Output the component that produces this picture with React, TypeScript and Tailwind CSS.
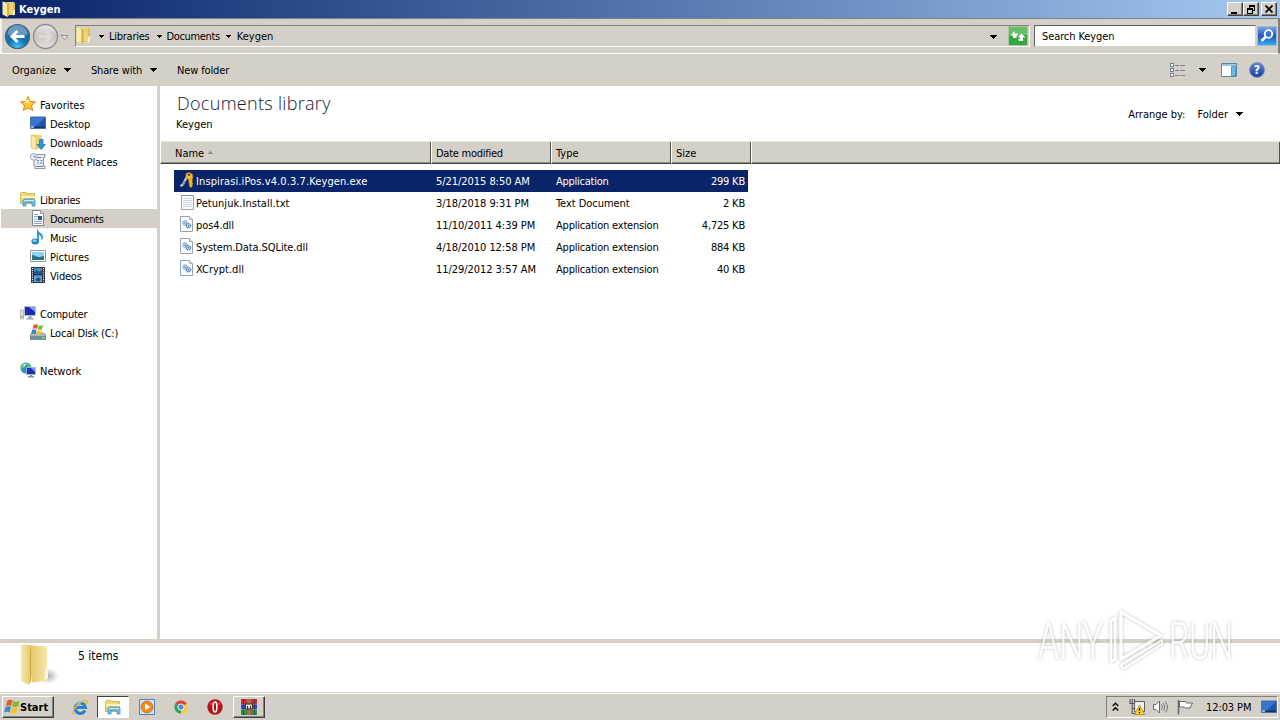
import type { ReactNode } from 'react';

interface NavItem {
  label: string;
  icon: ReactNode;
  nested?: boolean;
  active?: boolean;
  tracking?: string;
}

interface FileRow {
  name: string;
  date: string;
  type: string;
  size: string;
  icon: ReactNode;
  nameTracking?: string;
  typeTracking?: string;
  selected?: boolean;
}

const raised =
  'border border-t-white border-l-white border-r-[#404040] border-b-[#404040] shadow-[inset_-1px_-1px_0_#808080] bg-[#d4d0c8]';

function Label({ children, className = '' }: { children: ReactNode; className?: string }) {
  return <span className={`pt-[2px] ${className}`}>{children}</span>;
}

function Caret({ className = '' }: { className?: string }) {
  return (
    <svg className={`shrink-0 ${className}`} viewBox="0 0 7 4" shapeRendering="crispEdges">
      <path d="M0 0h7L3.5 4z" fill="#000" />
    </svg>
  );
}

function FolderIcon({ className = 'w-4 h-4' }: { className?: string }) {
  return (
    <svg className={className} viewBox="0 0 16 16">
      <path d="M6 1h7v13H6z" fill="#ecd572" />
      <path d="M12 1l2 .8v8l-2 4z" fill="#dcbd56" />
      <path d="M1.500.5l5 1.300V16l-5-2.500z" fill="#f7e9a4" />
      <path d="M6 1.500l2.200 1v12L6 16z" fill="#d6b450" />
      <path d="M12 9.500l2-.7v5l-2 .7z" fill="#fdf6d0" />
    </svg>
  );
}

function BigFolder() {
  return (
    <svg className="w-[40px] h-[44px]" viewBox="0 0 40 44">
      <defs>
        <linearGradient id="bf1" x1="0" x2="1">
          <stop offset="0" stopColor="#f8eba9" />
          <stop offset="1" stopColor="#e3c76c" />
        </linearGradient>
        <linearGradient id="bf2" x1="0" x2="1">
          <stop offset="0" stopColor="#e0c062" />
          <stop offset="1" stopColor="#f7e9a8" />
        </linearGradient>
        <radialGradient id="bf3">
          <stop offset="0" stopColor="#888" stopOpacity=".7" />
          <stop offset="1" stopColor="#999" stopOpacity="0" />
        </radialGradient>
      </defs>
      <ellipse cx="28" cy="33" rx="11" ry="8" fill="url(#bf3)" />
      <path d="M7 2l20 1.500v34l-15 2z" fill="url(#bf2)" />
      <path d="M1 2l5-1 5 5v31l-2 5-8-4z" fill="url(#bf1)" />
      <path d="M10.500 6v33" stroke="#c8a64a" strokeWidth="1" />
      <path d="M25 25l3 2v8l-3 2z" fill="#fffbe6" />
    </svg>
  );
}

function StarIcon() {
  return (
    <svg className="w-4 h-4" viewBox="0 0 16 16">
      <path d="M8 .5l2.200 4.900 5.300.5-4 3.500 1.200 5.200L8 11.900l-4.800 2.700 1.300-5.200L.5 5.900l5.400-.5z" fill="#ffc52e" stroke="#df8422" strokeWidth="1" />
      <path d="M8 2.500l1.300 3.900 2.700.3H4z" fill="#fff1a0" />
    </svg>
  );
}

function DesktopIcon() {
  return (
    <svg className="w-4 h-4" viewBox="0 0 16 16">
      <path d="M.5 2h15v11.500H.5z" fill="#1e55b5" stroke="#4d6f9f" />
      <path d="M1 2.500h14L6 11H1z" fill="#3876ce" />
      <path d="M1 11.500h14V13H1z" fill="#173466" />
      <path d="M1 11h3v2H1z" fill="#76b7e8" />
    </svg>
  );
}

function DownloadsIcon() {
  return (
    <svg className="w-4 h-4" viewBox="0 0 16 16">
      <path d="M1 1l5-.5 6 1V14l-6 1.500L1 13.500z" fill="#eed678" />
      <path d="M1 1l5 1.500v13l-5-2z" fill="#f9eaa4" stroke="#d4b352" strokeWidth=".6" />
      <path d="M9.500 5.500h3.500v5h2.500l-4.200 5-4.300-5h2.500z" fill="#2e95dc" stroke="#176ca8" strokeWidth=".7" />
    </svg>
  );
}

function RecentIcon() {
  return (
    <svg className="w-4 h-4" viewBox="0 0 16 16">
      <path d="M4 1.500h11v3h-1.500v8.500H15v2.500H5V13H4z" fill="#e9eef3" stroke="#7d8a98" strokeWidth=".9" />
      <path d="M7.500 4.500h4M7 7.500h2m1.500 0h2M7 10h2m1 0h2.500M6 13.500h7" stroke="#5c84ae" />
      <circle cx="3.800" cy="3.800" r="3.400" fill="#eff4f8" stroke="#8b99a6" strokeWidth=".9" />
      <path d="M4 2v2h2" fill="none" stroke="#536779" strokeWidth=".8" />
    </svg>
  );
}

function LibraryIcon() {
  return (
    <svg className="w-4 h-4" viewBox="0 0 16 16">
      <path d="M.5 2.500l1-1H6l1 1h7.500v10H.5z" fill="#efd772" stroke="#c9a947" strokeWidth=".8" />
      <path d="M1 5h14v2H1z" fill="#fdf3b8" />
      <path d="M3 15V9.500L4.500 8h9L15 9.500V15h-3v-3.500H6V15z" fill="#6ec0e8" stroke="#3c8fc0" strokeWidth=".8" />
      <path d="M4 9.500h10" stroke="#c6ecfb" />
    </svg>
  );
}

function DocumentIcon() {
  return (
    <svg className="w-4 h-4" viewBox="0 0 16 16">
      <path d="M2.500.5h8l3 3v12h-11z" fill="#fff" stroke="#7c8794" />
      <path d="M10.500.5v3h3" fill="#d5dde6" stroke="#7c8794" strokeWidth=".8" />
      <path d="M4 4.500h4M4 6.500h4M4 11.500h8M4 13.500h8M4 9h3" stroke="#87a8cc" />
      <path d="M8 6h4v4H8z" fill="#2b5793" />
    </svg>
  );
}

function MusicIcon() {
  return (
    <svg className="w-4 h-4" viewBox="0 0 16 16">
      <path d="M7.500 0c.5 3.500 5.500 4 5.500 8 0 2-1 3-1.700 3.500C12 8 10.500 6.500 9 6v6.500H7V0z" fill="#2d9bdf" />
      <ellipse cx="5.200" cy="12.500" rx="3.800" ry="3" fill="#2485cb" />
      <ellipse cx="4.700" cy="11.800" rx="2" ry="1.200" fill="#87d1f6" />
    </svg>
  );
}

function PictureIcon() {
  return (
    <svg className="w-4 h-4" viewBox="0 0 16 16">
      <path d="M.5 2.500h15v11H.5z" fill="#fff" stroke="#8996a3" />
      <path d="M2 4h12v8H2z" fill="#8fd1f4" />
      <path d="M2 7c3 0 4 2 7 2s3-1 5-1v4H2z" fill="#2b7a70" />
      <path d="M2 10.500h12V12H2z" fill="#2769a5" />
    </svg>
  );
}

function VideoIcon() {
  return (
    <svg className="w-4 h-4" viewBox="0 0 16 16">
      <path d="M1 0h14v16H1z" fill="#303a46" />
      <path d="M4 1h8v6H4z" fill="#3e8ed0" />
      <path d="M4 8.500h8v6.500H4z" fill="#56a9e0" />
      <path d="M4 5l3-2 2 2 3-2v4H4zM5 13l3-3 3 2-2 3z" fill="#235886" />
      <path d="M2.500 1v14M13.500 1v14" stroke="#fff" strokeDasharray="1 1.200" />
      <path d="M9 2h2v1.500H9z" fill="#d56a51" />
    </svg>
  );
}

function ComputerIcon() {
  return (
    <svg className="w-4 h-4" viewBox="0 0 16 16">
      <path d="M.5 5h3v9h-3z" fill="#dfe3e5" stroke="#9ba2a8" strokeWidth=".7" />
      <path d="M1.300 11h1.400v1.500H1.300z" fill="#46b846" />
      <path d="M4.500 1.500h11v9h-11z" fill="#1a2bb1" stroke="#b9bfca" />
      <path d="M9 2h6v5z" fill="#7f9cf0" />
      <path d="M8.500 11h3v2h2v1.500h-7V13h2z" fill="#9ca6b3" />
    </svg>
  );
}

function DiskIcon() {
  return (
    <svg className="w-4 h-4" viewBox="0 0 16 16">
      <path d="M0 11l2-2h11l3 2v5H0z" fill="#aeb8bf" stroke="#69777f" strokeWidth=".7" />
      <path d="M0 12h16v3.500H0z" fill="#6c8f9a" />
      <path d="M12 13h2.500v1.500H12z" fill="#7de07e" />
      <path d="M3.700.8c1.700-1 3.500-.8 4.500.2L7 5c-1.300-.9-3-.9-4.500 0z" fill="#e9592a" />
      <path d="M8.900 1.300c1.300.7 2.700.7 4.300-.2L12 5.200c-1.500.8-3 .8-4.300.1z" fill="#80b92f" />
      <path d="M2.200 5.800c1.500-.7 3-.7 4.400.1L5.500 10c-1.200-.8-3-.8-4.500 0z" fill="#3d84d4" />
      <path d="M7.400 6.200c1.400.7 2.900.7 4.400-.1L10.700 10c-1.500.9-3 .8-4.400.1z" fill="#fbc51f" />
    </svg>
  );
}

function NetworkIcon() {
  return (
    <svg className="w-4 h-4" viewBox="0 0 16 16">
      <circle cx="6" cy="6" r="5.500" fill="#2a8fc8" />
      <path d="M3 1.500c2 0 3 1 2 3S2 6 1 8C0 5 1 2 3 1.500zM7 1c2 0 4 2 4 4L8 6z" fill="#5fc567" />
      <path d="M3 3c1-1.500 3-1.500 4-1L4 5z" fill="#c7f0f5" />
      <path d="M6.500 5.500h9v7h-9z" fill="#1c30b8" stroke="#b5bfd0" strokeWidth=".8" />
      <path d="M11 6h4v4z" fill="#7d9bf0" />
      <path d="M10 13h2v1h2v1.500H8V14h2z" fill="#8390a3" />
    </svg>
  );
}

function KeysIcon() {
  return (
    <svg className="w-4 h-4" viewBox="0 0 16 16">
      <path d="M7 4.500L3 12.500l-2.500 1.500" fill="none" stroke="#c3cbd4" strokeWidth="2.200" />
      <path d="M5 9l-2 4" stroke="#6c7888" />
      <path d="M6 1.500l3.500-1 3 2L13 6l-2 2-3-.5L6 5z" fill="#f2bd3a" stroke="#b97c12" strokeWidth=".6" />
      <path d="M8.500 7l1 7.500 1.500 1 1.700-1.500-.6-1.200.9-1-.9-1.200.3-3.600z" fill="#f0b62c" stroke="#b97c12" strokeWidth=".5" />
      <circle cx="9" cy="2.800" r="1.100" fill="#2a3055" />
    </svg>
  );
}

function TextFileIcon() {
  return (
    <svg className="w-4 h-4" viewBox="0 0 16 16">
      <path d="M1.500 1.500h12v14h-12z" fill="#fafcfd" stroke="#9aa5ad" />
      <path d="M3 4.500h9M3 6.500h9M3 8.500h9M3 10.500h9M3 12.500h9" stroke="#b4cbd8" strokeWidth=".8" />
      <path d="M2 1.500h11" stroke="#71808a" strokeDasharray="1 1" />
    </svg>
  );
}

function DllIcon() {
  return (
    <svg className="w-4 h-4" viewBox="0 0 16 16">
      <path d="M.5.5h9l3 3v12H.5z" fill="#fbfdfe" stroke="#97a2ad" />
      <path d="M9.500.5v3h3" fill="#dde5ec" stroke="#97a2ad" strokeWidth=".8" />
      <circle cx="5" cy="7" r="2.200" fill="#e7f1fa" stroke="#5d8ebf" strokeWidth="1.200" strokeDasharray="1.200 .5" />
      <circle cx="5" cy="7" r=".8" fill="#3c6fa6" />
      <circle cx="8.500" cy="9.700" r="2.200" fill="#d7e7f5" stroke="#3e74ac" strokeWidth="1.200" strokeDasharray="1.200 .5" />
      <circle cx="8.500" cy="9.700" r=".8" fill="#2a588e" />
    </svg>
  );
}

function BackForward() {
  return (
    <svg className="w-[66px] h-[28px] shrink-0" viewBox="0 0 66 28">
      <defs>
        <radialGradient id="back" cx=".5" cy=".95" r=".9">
          <stop offset="0" stopColor="#3fc6f3" />
          <stop offset=".45" stopColor="#1470b4" />
          <stop offset="1" stopColor="#2d6ea5" />
        </radialGradient>
        <linearGradient id="fwd" x1="0" y1="0" x2="0" y2="1">
          <stop offset="0" stopColor="#e9e8e6" />
          <stop offset=".5" stopColor="#c6c4c1" />
          <stop offset="1" stopColor="#e6e4e1" />
        </linearGradient>
      </defs>
      <circle cx="13.500" cy="14.500" r="12" fill="url(#back)" stroke="#46617b" strokeWidth="1.200" />
      <path d="M3.500 12.500a10 9.500 0 0 1 20 0q-10 3-20 0z" fill="#fff" opacity=".3" />
      <path d="M20.500 14.500H8M13.500 9L8 14.500l5.500 5.500" fill="none" stroke="#fff" strokeWidth="3" />
      <circle cx="41.500" cy="14.500" r="12" fill="url(#fwd)" stroke="#8c8c8c" strokeWidth="1.300" />
      <path d="M34.500 14.500H47M41.500 9l5.500 5.500-5.500 5.500" fill="none" stroke="#dcdad7" strokeWidth="3" />
      <path d="M57 13.500h7L60.500 17.500z" fill="#eee" stroke="#888" strokeWidth=".9" />
    </svg>
  );
}

function RefreshIcon() {
  return (
    <svg className="w-5 h-5" viewBox="0 0 20 20">
      <path d="M.5.5h19v19H.5z" fill="#35a53f" stroke="#a8cba3" />
      <path d="M1 1h18v8H1z" fill="#68bf65" />
      <path d="M2.500 9.500L6.500 5v2.500h3.500v2H8.500V12H5V9.500z" fill="#fff" />
      <path d="M13.500 7.500l4 4H15V15h-4.500v-2H12v-1.500H9.500z" fill="#fff" />
    </svg>
  );
}

function SearchIcon() {
  return (
    <svg className="w-5 h-5" viewBox="0 0 20 20">
      <defs>
        <linearGradient id="srch" x1="0" y1="0" x2="0" y2="1">
          <stop offset="0" stopColor="#7ea8e6" />
          <stop offset=".5" stopColor="#2455bd" />
          <stop offset="1" stopColor="#35b0ec" />
        </linearGradient>
      </defs>
      <path d="M.5.5h19v19H.5z" fill="url(#srch)" stroke="#9dbbe0" />
      <circle cx="11.500" cy="8" r="3.800" fill="#3b74cf" stroke="#fff" strokeWidth="1.800" />
      <path d="M8.500 11L4.500 15" stroke="#fff" strokeWidth="2.500" />
    </svg>
  );
}

function ViewIcon() {
  return (
    <svg className="w-4 h-4" viewBox="0 0 16 16" shapeRendering="crispEdges">
      <path d="M.5 1.500h3v3h-3zM.5 6.500h3v3h-3zM.5 11.500h3v3h-3z" fill="#fff" stroke="#6e7f95" />
      <path d="M5 3.500h4m1 0h5M5 8.500h4m1 0h5M5 13.500h4m1 0h5" stroke="#7a8490" />
    </svg>
  );
}

function PaneIcon() {
  return (
    <svg className="w-4 h-4" viewBox="0 0 16 16">
      <path d="M.5 1.500h15v13H.5z" fill="#fff" stroke="#5a86a8" />
      <path d="M1 2h14v2H1z" fill="#9cc7e2" />
      <path d="M10.500 4.500h4v9.500h-4z" fill="#6bb9e4" stroke="#4487b0" strokeWidth=".8" />
    </svg>
  );
}

function HelpIcon() {
  return (
    <span className="flex w-4 h-4 items-center justify-center rounded-full border border-[#8393bb] bg-gradient-to-b from-[#5c81d6] to-[#1b3f9f] text-[12px] leading-none font-bold text-white">
      ?
    </span>
  );
}

function WindowsFlag() {
  return (
    <svg className="w-4 h-4 shrink-0" viewBox="0 0 16 16">
      <path d="M3.500 1.500c2-1.200 3.800-1 5.200 0L7.200 7C5.700 6 3.700 6 1.800 7z" fill="#e75a2b" />
      <path d="M9.500 2c1.900 1 3.900 1 6.200-.3L14 7.200c-2 1.100-4.200 1-6 .1z" fill="#86b82e" />
      <path d="M1.500 8c1.900-1.100 3.900-1 5.500 0l-1.500 5.500c-1.500-1-3.500-1-5.500 0z" fill="#3c86d6" />
      <path d="M7.800 8.400c1.900.9 3.900.9 5.900-.1L12.200 14c-2 1.100-4 1-5.900.1z" fill="#fbc320" />
    </svg>
  );
}

function IeIcon() {
  return (
    <svg className="w-4 h-4" viewBox="0 0 16 16">
      <path d="M13 11.500A5.200 5.200 0 1 1 13.500 8.500H5" fill="none" stroke="#2482d2" strokeWidth="3" />
      <path d="M2.500 15C-1.500 14 4 5 11 1.800c4-1.500 4.800.5 3.300 3.200" fill="none" stroke="#e8b62c" strokeWidth="1.400" />
      <path d="M4 5.500a5 5 0 0 1 5-2.500" fill="none" stroke="#9fd8fa" />
    </svg>
  );
}

function MediaIcon() {
  return (
    <svg className="w-4 h-4" viewBox="0 0 16 16">
      <path d="M.5.5h15v15H.5z" fill="#cfe6f8" stroke="#4c86c0" />
      <circle cx="8" cy="8" r="6" fill="#f4881c" stroke="#cf6309" strokeWidth=".7" />
      <path d="M6 4.500l5.500 3.500L6 11.500z" fill="#fff" />
    </svg>
  );
}

function ChromeIcon() {
  return (
    <svg className="w-4 h-4" viewBox="0 0 16 16">
      <path d="M8 8L2.300 4.700A6.600 6.600 0 0 1 13.700 4.700z" fill="#df4035" />
      <path d="M8 8l5.700-3.300A6.600 6.600 0 0 1 8 14.600z" fill="#f9cb2c" />
      <path d="M8 8v6.600A6.600 6.600 0 0 1 2.300 4.700z" fill="#2ea253" />
      <circle cx="8" cy="8" r="3.100" fill="#4385ee" stroke="#fff" strokeWidth=".9" />
    </svg>
  );
}

function OperaIcon() {
  return (
    <svg className="w-4 h-4" viewBox="0 0 16 16">
      <circle cx="8" cy="8" r="7.700" fill="#b5121b" />
      <path d="M2 5a7 5 0 0 1 12 0q-6 3-12 0z" fill="#df5b60" opacity=".7" />
      <ellipse cx="8" cy="8" rx="1.800" ry="5" fill="#9c0d15" stroke="#fff" strokeWidth="1.600" />
    </svg>
  );
}

function WinrarIcon() {
  return (
    <svg className="w-4 h-4" viewBox="0 0 16 16">
      <path d="M0 0h16v5H0z" fill="#c02f3c" />
      <path d="M0 5.300h16v5H0z" fill="#3551b5" />
      <path d="M0 10.700h16V16H0z" fill="#2d8c46" />
      <path d="M6 0h4v16H6z" fill="#a2713c" />
      <path d="M4.500 5h7v5h-7z" fill="#ddd" stroke="#4a2d16" />
      <path d="M6.500 7v3m3-3v3" stroke="#533319" />
      <path d="M2.500 0v16M13.500 0v16" stroke="#29193f" strokeOpacity=".5" />
    </svg>
  );
}

function TrayIcons() {
  return (
    <>
      <svg className="w-[7px] h-[10px]" viewBox="0 0 7 10">
        <path d="M.7 4l2.800-2.800L6.300 4M.7 8.500l2.800-2.800 2.800 2.800" fill="none" stroke="#000" strokeWidth="1.300" />
      </svg>
      <svg className="ml-[10px] w-4 h-4" viewBox="0 0 16 16">
        <path d="M5.500 2.500h10v10h-10z" fill="#efefef" stroke="#5d5d5d" />
        <path d="M1 0v4.500h4.500V0M3.200 0v14.500h4M3.200 9.500h3" fill="none" stroke="#555" strokeWidth="1.100" />
        <path d="M10.500 6l5 9.500h-10z" fill="#ffdc22" stroke="#a88712" strokeWidth=".8" />
        <path d="M10.500 9v3m0 1v1.200" stroke="#000" strokeWidth="1.300" />
      </svg>
      <svg className="ml-2 w-4 h-4" viewBox="0 0 16 16">
        <path d="M.5 5.500H3L6.500 2v12L3 10.500H.5z" fill="#fff" stroke="#666" />
        <path d="M8.500 5.500q1.600 2.500 0 5M10.500 4q2.600 4 0 8M12.500 2.500q4 5.500 0 11" fill="none" stroke="#777" />
      </svg>
      <svg className="ml-2 w-4 h-4" viewBox="0 0 16 16">
        <path d="M1.500 1v14.500" stroke="#666" strokeWidth="1.500" />
        <path d="M2.500 2.500h6l1 1.500h6l-2.500 5H8.500L7.500 8h-5z" fill="#fff" stroke="#666" />
      </svg>
    </>
  );
}

const navGroups: NavItem[][] = [
  [
    { label: 'Favorites', icon: <StarIcon /> },
    { label: 'Desktop', icon: <DesktopIcon />, nested: true, tracking: 'tracking-[-0.1px]' },
    { label: 'Downloads', icon: <DownloadsIcon />, nested: true, tracking: 'tracking-[-0.2px]' },
    { label: 'Recent Places', icon: <RecentIcon />, nested: true, tracking: 'tracking-[-0.1px]' },
  ],
  [
    { label: 'Libraries', icon: <LibraryIcon />, tracking: 'tracking-[-0.3px]' },
    { label: 'Documents', icon: <DocumentIcon />, nested: true, active: true, tracking: 'tracking-[-0.3px]' },
    { label: 'Music', icon: <MusicIcon />, nested: true, tracking: 'tracking-[-0.3px]' },
    { label: 'Pictures', icon: <PictureIcon />, nested: true },
    { label: 'Videos', icon: <VideoIcon />, nested: true, tracking: 'tracking-[-0.2px]' },
  ],
  [
    { label: 'Computer', icon: <ComputerIcon />, tracking: 'tracking-[-0.25px]' },
    { label: 'Local Disk (C:)', icon: <DiskIcon />, nested: true, tracking: 'tracking-[-0.2px]' },
  ],
  [{ label: 'Network', icon: <NetworkIcon /> }],
];

const files: FileRow[] = [
  {
    name: 'Inspirasi.iPos.v4.0.3.7.Keygen.exe',
    date: '5/21/2015 8:50 AM',
    type: 'Application',
    size: '299 KB',
    icon: <KeysIcon />,
    nameTracking: 'tracking-[0.1px]',
    typeTracking: 'tracking-[-0.25px]',
    selected: true,
  },
  {
    name: 'Petunjuk.Install.txt',
    date: '3/18/2018 9:31 PM',
    type: 'Text Document',
    size: '2 KB',
    icon: <TextFileIcon />,
    nameTracking: 'tracking-[0.05px]',
    typeTracking: 'tracking-[-0.05px]',
  },
  {
    name: 'pos4.dll',
    date: '11/10/2011 4:39 PM',
    type: 'Application extension',
    size: '4,725 KB',
    icon: <DllIcon />,
    nameTracking: 'tracking-[-0.1px]',
    typeTracking: 'tracking-[-0.2px]',
  },
  {
    name: 'System.Data.SQLite.dll',
    date: '4/18/2010 12:58 PM',
    type: 'Application extension',
    size: '884 KB',
    icon: <DllIcon />,
    nameTracking: 'tracking-[-0.1px]',
    typeTracking: 'tracking-[-0.2px]',
  },
  {
    name: 'XCrypt.dll',
    date: '11/29/2012 3:57 AM',
    type: 'Application extension',
    size: '40 KB',
    icon: <DllIcon />,
    typeTracking: 'tracking-[-0.2px]',
  },
];

function TitleBar() {
  return (
    <div className="flex h-[18px] items-center bg-gradient-to-r from-[#0a246a] to-[#a6caf0] pl-px pr-[3px]">
      <FolderIcon className="h-4 w-4" />
      <Label className="ml-[2px] font-bold text-white">Keygen</Label>
      <div className="ml-auto flex">
        <span className={`flex h-[14px] w-4 ${raised}`}>
          <span className="mt-[9px] ml-[3px] h-[2px] w-[6px] bg-black" />
        </span>
        <span className={`flex h-[14px] w-4 ${raised}`}>
          <svg className="ml-[2px] mt-px h-[10px] w-[10px]" viewBox="0 0 10 10" shapeRendering="crispEdges">
            <path d="M3 1h6M3 2h6M3.500 1v3M8.500 1v5M7 6.500h2M1 4h6M1 5h6M1.500 4v5M6.500 4v5M1 9.500h6" fill="none" stroke="#000" />
          </svg>
        </span>
        <span className={`ml-[2px] flex h-[14px] w-4 ${raised}`}>
          <svg className="ml-[3px] mt-[2px] h-2 w-2" viewBox="0 0 8 8">
            <path d="M.5.500l7 7M7.500.500l-7 7" stroke="#000" strokeWidth="1.700" />
          </svg>
        </span>
      </div>
    </div>
  );
}

function AddressBar() {
  return (
    <div className="flex h-[36px] items-center border-t border-b border-l-2 border-t-[#808080] border-b-white border-l-[#f4f2ee] border-r-2 border-r-[#808080] pl-[2px]">
      <BackForward />
      <div className="ml-[5px] flex h-[22px] w-[955px] items-center border border-t-[#808080] border-l-[#808080] border-r-white border-b-white pr-px">
        <FolderIcon className="-mt-[2px] -ml-px h-[17px] w-[17px]" />
        <Caret className="mt-px ml-[7px] h-[3px] w-[5px]" />
        <Label className="ml-[5px] tracking-[-0.25px]">Libraries</Label>
        <Caret className="mt-px ml-[7px] h-[3px] w-[5px]" />
        <Label className="ml-[5px] tracking-[-0.35px]">Documents</Label>
        <Caret className="mt-px ml-[6px] h-[3px] w-[5px]" />
        <Label className="ml-[6px]">Keygen</Label>
        <Caret className="mt-[2px] ml-auto mr-[11px] h-1 w-[7px]" />
        <RefreshIcon />
      </div>
      <div className="ml-1 flex h-[22px] w-[222px] items-center border border-t-[#606060] border-l-[#606060] border-r-[#d4d0c8] border-b-[#d4d0c8] bg-white pl-[7px]">
        <Label className="tracking-[-0.1px]">Search Keygen</Label>
      </div>
      <div className="ml-px">
        <SearchIcon />
      </div>
    </div>
  );
}

function Toolbar() {
  return (
    <div className="flex h-8 items-center pl-3 pr-[15px]">
      <Label className="tracking-[-0.05px]">Organize</Label>
      <Caret className="ml-2 h-1 w-[7px]" />
      <Label className="ml-5 tracking-[-0.15px]">Share with</Label>
      <Caret className="ml-2 h-1 w-[7px]" />
      <Label className="ml-5 tracking-[-0.15px]">New folder</Label>
      <div className="ml-auto flex items-center">
        <ViewIcon />
        <Caret className="ml-[13px] h-1 w-[7px]" />
        <span className="ml-[15px]">
          <PaneIcon />
        </span>
        <span className="ml-3">
          <HelpIcon />
        </span>
      </div>
    </div>
  );
}

function Sidebar() {
  return (
    <nav className="flex w-[157px] shrink-0 flex-col gap-[19px] bg-white pt-[9px]">
      {navGroups.map((group) => (
        <ul key={group[0].label}>
          {group.map((item) => (
            <li
              key={item.label}
              className={`ml-px flex h-[19px] items-center ${item.nested ? 'pl-[29px]' : 'pl-[19px]'} ${item.active ? 'bg-[#d4d0c8]' : ''}`}
            >
              <span className="mb-px">{item.icon}</span>
              <Label className={`ml-1 ${item.tracking ?? ''}`}>{item.label}</Label>
            </li>
          ))}
        </ul>
      ))}
    </nav>
  );
}

function ColumnHeader({ label, className, sorted }: { label: string; className: string; sorted?: boolean }) {
  return (
    <div className={`flex h-[23px] items-center border-t border-l border-b border-t-[#e8e6e2] border-l-white border-b-[#404040] shadow-[inset_-1px_0_0_#505050,inset_0_-1px_0_#909090] ${className}`}>
      <Label>{label}</Label>
      {sorted && (
        <svg className="ml-1 h-[3px] w-[5px]" viewBox="0 0 5 3">
          <path d="M0 3L2.500 0 5 3z" fill="#808080" />
        </svg>
      )}
    </div>
  );
}

function FileList() {
  return (
    <main className="flex flex-1 flex-col bg-white">
      <div className="flex h-[55px] justify-between pl-4 pr-[37px]">
        <div>
          <h1 className="mt-[5px] ml-px font-['Open_Sans',sans-serif] text-[18px] leading-6 font-light tracking-[0.3px] text-[#14183a]">Documents library</h1>
          <p className="mt-[3px] leading-[14px]">Keygen</p>
        </div>
        <div className="flex items-center">
          <Label>Arrange by:</Label>
          <Label className="ml-3">Folder</Label>
          <Caret className="ml-2 h-1 w-[7px]" />
        </div>
      </div>
      <div className="flex bg-[#d4d0c8]">
        <ColumnHeader label="Name" className="w-[271px] pl-[14px]" sorted />
        <ColumnHeader label="Date modified" className="w-[120px] pl-1 tracking-[-0.25px]" />
        <ColumnHeader label="Type" className="w-[120px] pl-1" />
        <ColumnHeader label="Size" className="w-20 pl-1" />
        <ColumnHeader label="" className="flex-1" />
      </div>
      <div className="mt-[6px] ml-[14px] w-[574px]">
        {files.map((file) => (
          <div
            key={file.name}
            className={`flex h-[22px] items-center pl-[5px] pr-[3px] ${file.selected ? 'bg-[#0a246a] text-white' : ''}`}
          >
            <span className="mb-[2px] w-4 pl-px">{file.icon}</span>
            <Label className={`ml-px w-[240px] ${file.nameTracking ?? ''}`}>{file.name}</Label>
            <Label className="w-[120px] tracking-[-0.05px]">{file.date}</Label>
            <Label className={`w-[120px] ${file.typeTracking ?? ''}`}>{file.type}</Label>
            <Label className="ml-auto tracking-[-0.2px]">{file.size}</Label>
          </div>
        ))}
      </div>
    </main>
  );
}

function Watermark() {
  return (
    <svg className="absolute left-[1034px] top-[604px] h-[74px] w-[216px] overflow-visible" viewBox="0 0 216 74">
      <defs>
        <filter id="halo" x="-10%" y="-10%" width="120%" height="120%">
          <feDropShadow dx="0" dy="0" stdDeviation="1.600" floodColor="#666" floodOpacity=".6" />
        </filter>
      </defs>
      <g filter="url(#halo)" opacity=".8" fill="none" stroke="#fff" strokeWidth="3" strokeLinejoin="round">
        <path d="M87 8L127 31.500 87 55z" />
        <path d="M81 14l-4 3v41l4-3z" strokeWidth="2.500" />
        <path d="M87 61l2 4 39-25v-4z" strokeWidth="2" />
      </g>
      <g filter="url(#halo)" opacity=".8" fill="#fff" className="font-['Roboto',sans-serif] text-[51px] font-light">
        <text x="4" y="55" textLength="65" lengthAdjust="spacingAndGlyphs">ANY</text>
        <text x="135" y="55" textLength="64" lengthAdjust="spacingAndGlyphs">RUN</text>
      </g>
    </svg>
  );
}

function Taskbar() {
  return (
    <footer className="flex h-7 items-center border-t border-[#d4d0c8] bg-[#d4d0c8] pl-[2px] shadow-[inset_0_1px_0_#fff]">
      <div className={`flex h-[22px] w-[52px] items-center pl-px font-bold ${raised}`}>
        <WindowsFlag />
        <Label>Start</Label>
      </div>
      <div className="ml-[18px]">
        <IeIcon />
      </div>
      <div className="ml-[9px] flex h-[22px] w-8 items-center justify-center border border-t-[#404040] border-l-[#404040] border-r-white border-b-white bg-white pt-px">
        <LibraryIcon />
      </div>
      <div className="ml-[10px] flex gap-[18px]">
        <MediaIcon />
        <ChromeIcon />
        <OperaIcon />
      </div>
      <div className={`ml-[10px] flex h-[22px] w-8 items-center justify-center ${raised}`}>
        <WinrarIcon />
      </div>
      <div className="ml-auto mr-[2px] flex h-[22px] w-[172px] items-center border border-t-[#808080] border-l-[#808080] border-r-white border-b-white pl-[5px]">
        <TrayIcons />
        <Label className="ml-[13px] tracking-[-0.1px]">12:03 PM</Label>
        <span className="ml-auto">
          <DesktopIcon />
        </span>
      </div>
    </footer>
  );
}

export default function App() {
  return (
    <div className="relative flex h-[720px] w-[1280px] flex-col overflow-hidden bg-[#d4d0c8] font-['DejaVu_Sans_Condensed','DejaVu_Sans',sans-serif] text-[11px] leading-[14px] whitespace-nowrap text-black">
      <TitleBar />
      <AddressBar />
      <Toolbar />
      <div className="flex h-[553px]">
        <Sidebar />
        <div className="w-[3px] shrink-0" />
        <FileList />
      </div>
      <div className="mt-1 flex h-[49px] bg-white pl-5">
        <BigFolder />
        <span className="mt-[5px] ml-[18px] text-[12px] leading-4">5 items</span>
      </div>
      <Taskbar />
      <Watermark />
    </div>
  );
}
